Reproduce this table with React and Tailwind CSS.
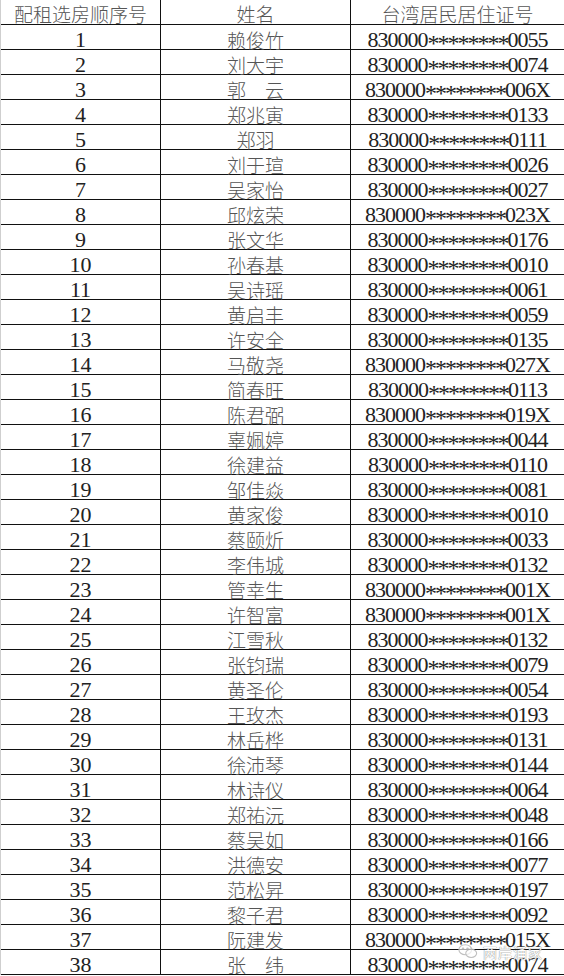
import React from "react";

const rows = [
  ["1", "赖俊竹", "0055"],
  ["2", "刘大宇", "0074"],
  ["3", "郭　云", "006X"],
  ["4", "郑兆寅", "0133"],
  ["5", "郑羽", "0111"],
  ["6", "刘于瑄", "0026"],
  ["7", "吴家怡", "0027"],
  ["8", "邱炫荣", "023X"],
  ["9", "张文华", "0176"],
  ["10", "孙春基", "0010"],
  ["11", "吴诗瑶", "0061"],
  ["12", "黄启丰", "0059"],
  ["13", "许安全", "0135"],
  ["14", "马敬尧", "027X"],
  ["15", "简春旺", "0113"],
  ["16", "陈君弼", "019X"],
  ["17", "辜姵婷", "0044"],
  ["18", "徐建益", "0110"],
  ["19", "邹佳焱", "0081"],
  ["20", "黄家俊", "0010"],
  ["21", "蔡颐炘", "0033"],
  ["22", "李伟城", "0132"],
  ["23", "管幸生", "001X"],
  ["24", "许智富", "001X"],
  ["25", "江雪秋", "0132"],
  ["26", "张钧瑞", "0079"],
  ["27", "黄圣伦", "0054"],
  ["28", "王玫杰", "0193"],
  ["29", "林岳桦", "0131"],
  ["30", "徐沛琴", "0144"],
  ["31", "林诗仪", "0064"],
  ["32", "郑祐沅", "0048"],
  ["33", "蔡吴如", "0166"],
  ["34", "洪德安", "0077"],
  ["35", "范松昇", "0197"],
  ["36", "黎子君", "0092"],
  ["37", "阮建发", "015X"],
  ["38", "张　纬", "0074"],
];

const serif = "font-['Liberation_Serif','Noto_Sans_CJK_SC',serif]";
const cjk = "font-['Noto_Sans_CJK_SC','Liberation_Serif',sans-serif]";

// asterisks a bit bigger and lower, like the SimSun ones in the scan
const IdText = ({ tail }) => (
  <span className={`${serif} text-[22px] tracking-[-1px] leading-none text-[#222] whitespace-nowrap`}>
    830000
    <span className="relative top-[4px] text-[24px] leading-[14px] tracking-[-2px]">********</span>
    {tail}
  </span>
);

const Cell = ({ children, pad = "pt-[5px]" }) => (
  <div className={`h-[25px] flex items-center justify-center border-b border-r border-[#111] ${pad}`}>
    {children}
  </div>
);

const Head = ({ children }) => (
  <Cell pad="pt-[2px]">
    <span className={`${cjk} text-[19px] leading-none font-light text-[#555]`}>{children}</span>
  </Cell>
);

const App = () => {
  return (
    <div className="relative w-[564px] h-[976px] bg-white overflow-hidden">
      <div className="grid grid-cols-[160px_190px_214px] border-l border-l-[#cfcfcf]">
        {/* Header */}
        <Head>配租选房顺序号</Head>
        <Head>姓名</Head>
        <Head>台湾居民居住证号</Head>

        {rows.map(([no, name, tail]) => (
          <React.Fragment key={no}>
            <Cell>
              <span className={`${serif} text-[22px] leading-none text-[#222]`}>{no}</span>
            </Cell>
            <Cell pad="pt-[4px]">
              <span className={`${cjk} text-[19px] leading-none font-light text-[#555]`}>{name}</span>
            </Cell>
            <Cell>
              <IdText tail={tail} />
            </Cell>
          </React.Fragment>
        ))}
      </div>

      {/* Watermark */}
      <div className="absolute left-[458px] top-[943px] flex items-center gap-[5px] opacity-90">
        <svg width="20" height="17" viewBox="0 0 22 18" fill="none" stroke="#b9b9b9" strokeWidth="1.2">
          <ellipse cx="8" cy="7" rx="7" ry="5.5" fill="white" fillOpacity="0.7" />
          <ellipse cx="14.5" cy="11" rx="6" ry="4.6" fill="white" fillOpacity="0.7" />
          <circle cx="5.5" cy="6" r="0.8" fill="#b9b9b9" />
          <circle cx="10.5" cy="6" r="0.8" fill="#b9b9b9" />
        </svg>
        <span className={`${cjk} text-[14px] leading-none text-white tracking-[1px] [text-shadow:0_0_1px_#8a8a8a,0_0_1px_#8a8a8a]`}>
          两岸涌家
        </span>
      </div>
    </div>
  );
};

export default App;
